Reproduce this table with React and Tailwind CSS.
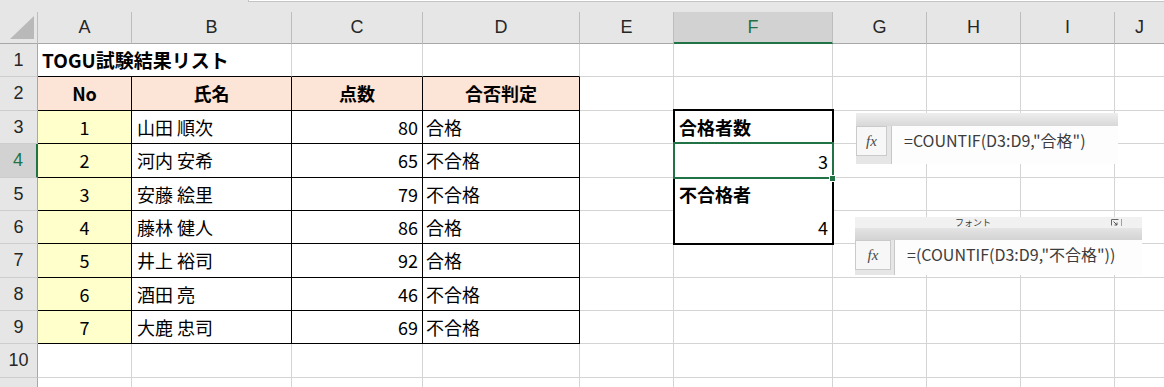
import React from 'react';

// Column widths (each includes its right gridline pixel)
const COL_W = ['w-[94px]', 'w-[160px]', 'w-[131px]', 'w-[157px]', 'w-[94px]', 'w-[159px]', 'w-[94px]', 'w-[94px]', 'w-[94px]', 'w-[50px]'];
const LETTERS = ['A', 'B', 'C', 'D', 'E', 'F', 'G', 'H', 'I', 'J'];

const base = 'flex items-center whitespace-nowrap overflow-hidden';
const rg = 'border-r border-r-[#d4d4d4]';
const rk = 'border-r border-r-black';
const bgl = 'border-b border-b-[#d4d4d4]';
const bk = 'border-b border-b-black';

const ROWS = [
  ['山田 順次', 80, '合格'],
  ['河内 安希', 65, '不合格'],
  ['安藤 絵里', 79, '不合格'],
  ['藤林 健人', 86, '合格'],
  ['井上 裕司', 92, '合格'],
  ['酒田 亮', 46, '不合格'],
  ['大鹿 忠司', 69, '不合格'],
];

function Cell({ className = '', children }) {
  return <div className={`${base} ${className}`}>{children}</div>;
}

function Blank() {
  return <div className={`${rg} ${bgl}`} />;
}

function RowHead({ n, sel }) {
  const cls = sel
    ? 'bg-[#d2d2d2] text-[#217346] border-r-2 border-r-[#217346]'
    : 'bg-[#e6e6e6] text-[#262626] border-r border-r-[#a8a8a8]';
  return (
    <div className={`flex items-center justify-center border-b border-b-[#cdcdcd] font-['Liberation_Sans',Arial,sans-serif] text-[18px] ${cls}`}>
      {n}
    </div>
  );
}

function Blanks({ count }) {
  return Array.from({ length: count }, (_, i) => <Blank key={i} />);
}

function CountBlock() {
  return (
    <div className="row-span-4 relative flex flex-col">
      <div className="h-[33px] flex items-center pl-[5px] font-bold">合格者数</div>
      <div className="h-[34px] relative flex items-center justify-end pr-[5px]">
        3
        <div className="absolute -left-px -top-[2px] -right-px -bottom-px border-2 border-[#217346] z-20 pointer-events-none" />
        <div className="absolute -right-[3px] -bottom-[4px] w-[7px] h-[7px] bg-[#217346] border border-white z-30" />
      </div>
      <div className="h-[33px] flex items-center pl-[5px] font-bold">不合格者</div>
      <div className="h-[33px] flex items-center justify-end pr-[5px]">4</div>
      <div className="absolute -left-px -top-[2px] -right-px -bottom-px border-2 border-black z-10 pointer-events-none" />
    </div>
  );
}

function FormulaBox({ formula, ribbon }) {
  return (
    <div className="flex flex-col h-full font-['Noto_Sans_CJK_JP',sans-serif]">
      {ribbon && (
        <div className="h-[11px] bg-[#f1f1f1] relative flex">
          <div className="pl-[100px] leading-[11px] text-[9px] text-[#3a3a3a]">フォント</div>
          <div className="absolute left-[256px] top-[2px]">
            <svg width="8" height="7" viewBox="0 0 8 7">
              <path d="M0.5 6.5 V0.5 H7.5" fill="none" stroke="#666" strokeWidth="1" />
              <path d="M2.5 2.5 L6 6 M6 3.5 V6 H3.5" fill="none" stroke="#555" strokeWidth="1" />
            </svg>
          </div>
          <div className="absolute left-[266px] top-[2px] w-px h-[7px] bg-[#a0a0a0]" />
        </div>
      )}
      <div className={`${ribbon ? 'h-[12px] from-[#e4e4e4] to-[#d3d3d3]' : 'h-[13px] from-[#eeeeee] to-[#d8d8d8]'} bg-gradient-to-b`} />
      <div className="flex-1 flex bg-[#e6e6e6]">
        <div className={ribbon ? 'w-[39px]' : 'w-[35px]'}>
          <div className={`${ribbon ? 'w-[36px]' : 'w-[31px]'} h-[30px] bg-[#f7f7f7] border border-[#cacaca] flex items-center justify-center`}>
            <span className="font-['Liberation_Serif',serif] italic text-[15px] text-[#4a4a4a]">fx</span>
          </div>
        </div>
        <div className="flex-1 bg-[#fdfdfd] border-l border-l-[#c8c8c8] pl-[12px] pt-[4px] leading-[20px] text-[16px] text-[#3c3c3c] whitespace-nowrap">
          {formula}
        </div>
      </div>
    </div>
  );
}

export default function App() {
  return (
    <div className="relative w-[1164px] h-[387px] overflow-hidden bg-white text-black">
      {/* strip above the column headings */}
      <div className="h-[12px] flex bg-[#e6e6e6]">
        <div className="w-[248px]" />
        <div className="flex-1 h-[2px] bg-white border-l border-b border-[#c4c4c4]" />
      </div>

      {/* column headings */}
      <div className="h-[32px] flex bg-[#e6e6e6] font-['Liberation_Sans',Arial,sans-serif] text-[18px] text-[#262626]">
        <div className="w-[38px] shrink-0 border-r border-r-[#bdbdbd] border-b border-b-[#a8a8a8]">
          <svg width="37" height="31" viewBox="0 0 37 31">
            <path d="M10 27 L34 27 L34 4 Z" fill="#b9b9b9" />
          </svg>
        </div>
        {LETTERS.map((l, i) => {
          const sel = l === 'F';
          const cls = sel
            ? 'bg-[#d2d2d2] text-[#217346] border-b-2 border-b-[#217346]'
            : 'border-b border-b-[#a8a8a8]';
          return (
            <div key={l} className={`${COL_W[i]} shrink-0 flex items-center justify-center border-r border-r-[#bdbdbd] ${cls}`}>
              {l}
            </div>
          );
        })}
      </div>

      {/* sheet body */}
      <div className="grid grid-cols-[38px_94px_160px_131px_157px_94px_159px_94px_94px_94px_50px] grid-rows-[33px_34px_33px_34px_33px_33px_34px_33px_33px_34px_33px] font-['Noto_Sans_CJK_JP',sans-serif] text-[18px]">
        {/* row 1 */}
        <RowHead n={1} />
        <Cell className={`col-span-2 pl-[4px] font-bold text-[19px] ${rg} ${bk}`}>TOGU試験結果リスト</Cell>
        <div className={`${rg} ${bk}`} />
        <div className={`${rg} ${bk}`} />
        <Blanks count={6} />

        {/* row 2 */}
        <RowHead n={2} />
        {['No', '氏名', '点数', '合否判定'].map((h) => (
          <Cell key={h} className={`justify-center font-bold bg-[#fce4d6] ${rk} ${bk}`}>{h}</Cell>
        ))}
        <Blanks count={6} />

        {/* rows 3-9 */}
        {ROWS.map(([name, score, result], i) => (
          <React.Fragment key={name}>
            <RowHead n={i + 3} sel={i + 3 === 4} />
            <Cell className={`justify-center bg-[#ffffcc] ${rk} ${bk}`}>{i + 1}</Cell>
            <Cell className={`pl-[5px] ${rk} ${bk}`}>{name}</Cell>
            <Cell className={`justify-end pr-[4px] ${rk} ${bk}`}>{score}</Cell>
            <Cell className={`pl-[3px] ${rk} ${bk}`}>{result}</Cell>
            <Blank />
            {i === 0 && <CountBlock />}
            {i > 3 && <Blank />}
            <Blanks count={4} />
          </React.Fragment>
        ))}

        {/* rows 10-11 */}
        <RowHead n={10} />
        <Blanks count={10} />
        <RowHead n="" />
        <Blanks count={10} />
      </div>

      {/* formula bar snippets pasted over the sheet */}
      <div className="absolute left-[856px] top-[113px] w-[262px] h-[51px] z-40">
        <FormulaBox formula={'=COUNTIF(D3:D9,"合格")'} />
      </div>
      <div className="absolute left-[855px] top-[217px] w-[287px] h-[58px] z-40">
        <FormulaBox ribbon formula={'=(COUNTIF(D3:D9,"不合格"))'} />
      </div>
    </div>
  );
}
